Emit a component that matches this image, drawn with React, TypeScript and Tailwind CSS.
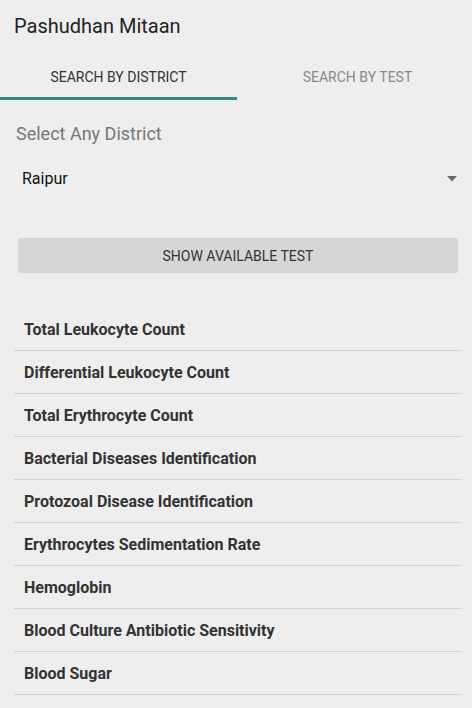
import React from "react";

const tests = [
  "Total Leukocyte Count",
  "Differential Leukocyte Count",
  "Total Erythrocyte Count",
  "Bacterial Diseases Identification",
  "Protozoal Disease Identification",
  "Erythrocytes Sedimentation Rate",
  "Hemoglobin",
  "Blood Culture Antibiotic Sensitivity",
  "Blood Sugar",
];

export default function App() {
  return (
    <div
      className="w-[472px] h-[708px] overflow-hidden bg-[#eeeeee] flex flex-col"
      style={{ fontFamily: "Roboto, 'Liberation Sans', sans-serif" }}
    >
      <div className="h-[52px] pl-[14px] pt-[14px]">
        <div className="text-[20px] leading-6 text-[#222222]">Pashudhan Mitaan</div>
      </div>
      <div className="flex h-12">
        <div className="w-[237px] flex items-center justify-center border-b-[3px] border-[#2b8a84] pt-[6px] text-[14px] text-[#333333]">
          SEARCH BY DISTRICT
        </div>
        <div className="flex-1 flex items-center justify-center pt-[3px] pl-[6px] text-[14px] text-[#8a8a8a]">
          SEARCH BY TEST
        </div>
      </div>
      <div className="mt-[22px] pl-4 text-[18px] leading-6 text-[#777777]">Select Any District</div>
      <div className="mt-[21px] flex items-center pl-[22px] pr-[15px] h-6">
        <div className="flex-1 text-[16px] text-[#111111]">Raipur</div>
        <svg width="10" height="6" viewBox="0 0 10 6">
          <path d="M0 0 L10 0 L5 5.5 Z" fill="#6b6b6b" />
        </svg>
      </div>
      <div className="mt-[47px] ml-[18px] mr-[14px] h-[35px] pt-[1px] rounded-[2px] bg-[#d6d6d6] flex items-center justify-center text-[14px] text-[#333333]">
        SHOW AVAILABLE TEST
      </div>
      <div className="mt-[35px] ml-[14px] w-[447px] flex flex-col">
        {tests.map((t) => (
          <div
            key={t}
            className="h-[43px] flex items-center pl-[10px] pt-[1px] border-b border-[#d2d2d2] text-[16px] font-bold text-[#333333]"
          >
            {t}
          </div>
        ))}
      </div>
    </div>
  );
}
